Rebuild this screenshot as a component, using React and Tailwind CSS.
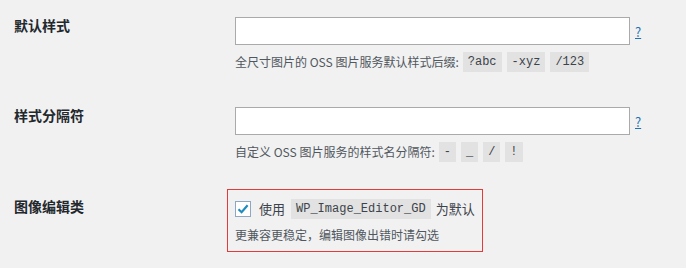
import React, { useState } from "react";

const cjk = { fontFamily: '"Noto Sans CJK SC", "Noto Sans", sans-serif' };

const Code = ({ children }) => (
  <code className="inline-block h-[20px] px-[5px] bg-[#e2e2e2] text-[#3c434a] text-[12px] leading-[20px] font-['Liberation_Mono',monospace] whitespace-pre">
    {children}
  </code>
);

const Help = () => (
  <a href="#" className="ml-[5px] mt-[7px] text-[13px] leading-[16px] text-[#2271b1] underline">
    ?
  </a>
);

const Row = ({ label, children, className }) => (
  <div className={"flex " + className}>
    <div className="w-[235px] shrink-0 pl-[14px] text-[14px] font-bold text-[#23282d] leading-[20px] mt-[-2px]">
      {label}
    </div>
    <div className="flex-1">{children}</div>
  </div>
);

export default function App() {
  const [useGd, setUseGd] = useState(true);

  return (
    <div className="w-[686px] h-[268px] bg-[#f1f1f1] overflow-hidden" style={cjk}>
      {/* 默认样式 */}
      <Row label="默认样式" className="h-[90px] pt-[17px]">
        <div className="flex items-start">
          <input type="text" className="w-[395px] h-[28px] bg-white border border-[#aaaaaa] outline-none px-2" />
          <Help />
        </div>
        <div className="mt-[7px] flex items-center gap-[5px] text-[12px] text-[#50575e] leading-[20px]">
          <span className="mr-[-1px]">全尺寸图片的 OSS 图片服务默认样式后缀:</span>
          <Code>?abc</Code>
          <Code>-xyz</Code>
          <Code>/123</Code>
        </div>
      </Row>

      {/* 样式分隔符 */}
      <Row label="样式分隔符" className="h-[90px] pt-[17px]">
        <div className="flex items-start">
          <input type="text" className="w-[395px] h-[28px] bg-white border border-[#aaaaaa] outline-none px-2" />
          <Help />
        </div>
        <div className="mt-[7px] flex items-center gap-[5px] text-[12px] text-[#50575e] leading-[20px]">
          <span className="mr-[-1px]">自定义 OSS 图片服务的样式名分隔符:</span>
          <Code>-</Code>
          <Code>_</Code>
          <Code>/</Code>
          <Code>!</Code>
        </div>
      </Row>

      {/* 图像编辑类 */}
      <div className="flex pt-[9px]">
        <div className="w-[227px] shrink-0 pl-[14px] pt-[7px] text-[14px] font-bold text-[#23282d] leading-[20px]">
          图像编辑类
        </div>
        <div className="border border-[#e33b3b] px-[7px] pt-[9px] pb-[7px] w-fit">
          <label className="flex items-center text-[13px] text-[#3c434a] leading-[20px]">
            <span
              onClick={() => setUseGd(!useGd)}
              className="w-[16px] h-[16px] bg-white border border-[#8fa8c2] flex items-center justify-center cursor-pointer"
            >
              {useGd && (
                <svg width="12" height="12" viewBox="0 0 12 12">
                  <path d="M1.5 6.2 L4.6 9.2 L10.6 2.2" fill="none" stroke="#1e8cbe" strokeWidth="2.2" />
                </svg>
              )}
            </span>
            <span className="ml-[8px] mr-[6px]">使用</span>
            <Code>WP_Image_Editor_GD</Code>
            <span className="ml-[5px]">为默认</span>
          </label>
          <p className="mt-[7px] text-[12px] text-[#50575e] leading-[18px]">更兼容更稳定，编辑图像出错时请勾选</p>
        </div>
      </div>
    </div>
  );
}
